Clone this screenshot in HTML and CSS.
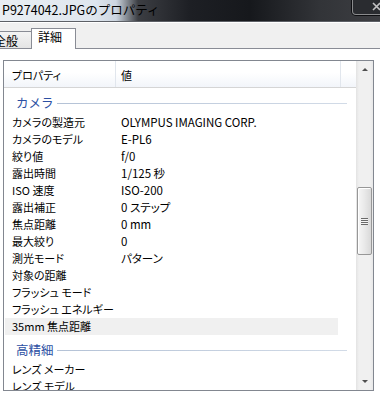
FILE: index.html
```html
<!DOCTYPE html>
<html lang="ja">
<head>
    <meta charset="UTF-8">
    <title>P9274042.JPGのプロパティ</title>
    <link rel="stylesheet" href="styles.css">
</head>
<body>
<div class="window">
    <div class="titlebar">
        <span class="title">P9274042.JPGのプロパティ</span>
        <span class="close">
            <svg width="10" height="9" viewBox="0 0 10 9">
                <path d="M1 1 L8 8 M8 1 L1 8" stroke="#e8e8e8" stroke-width="1.6" fill="none"/>
            </svg>
        </span>
    </div>
    <div class="tabs">
        <div class="tab">全般</div>
        <div class="tab active">詳細</div>
    </div>
    <div class="panel">
        <div class="listbox">
            <div class="list">
                <div class="header">
                    <div class="col col-name">プロパティ</div>
                    <div class="col col-value">値</div>
                    <div class="col col-rest"></div>
                </div>
                <div class="rows">
                    <div class="group"><span>カメラ</span></div>
                    <div class="row"><span class="name">カメラの製造元</span><span class="value">OLYMPUS IMAGING CORP.</span></div>
                    <div class="row"><span class="name">カメラのモデル</span><span class="value">E-PL6</span></div>
                    <div class="row"><span class="name">絞り値</span><span class="value">f/0</span></div>
                    <div class="row"><span class="name">露出時間</span><span class="value">1/125 秒</span></div>
                    <div class="row"><span class="name">ISO 速度</span><span class="value">ISO-200</span></div>
                    <div class="row"><span class="name">露出補正</span><span class="value">0 ステップ</span></div>
                    <div class="row"><span class="name">焦点距離</span><span class="value">0 mm</span></div>
                    <div class="row"><span class="name">最大絞り</span><span class="value">0</span></div>
                    <div class="row"><span class="name">測光モード</span><span class="value">パターン</span></div>
                    <div class="row"><span class="name">対象の距離</span><span class="value"></span></div>
                    <div class="row"><span class="name">フラッシュ モード</span><span class="value"></span></div>
                    <div class="row"><span class="name">フラッシュ エネルギー</span><span class="value"></span></div>
                    <div class="row hover"><span class="name">35mm 焦点距離</span><span class="value"></span></div>
                    <div class="group"><span>高精細</span></div>
                    <div class="row"><span class="name">レンズ メーカー</span><span class="value"></span></div>
                    <div class="row"><span class="name">レンズ モデル</span><span class="value"></span></div>
                </div>
            </div>
            <div class="scrollbar">
                <div class="arrow arrow-up"></div>
                <div class="track">
                    <div class="thumb"><span class="grip"></span></div>
                </div>
                <div class="arrow arrow-down"></div>
            </div>
        </div>
    </div>
</div>
</body>
</html>
```

FILE: styles.css
```css
body {
    margin: 0;
    background: #ffffff;
    font-family: "Noto Sans CJK JP", sans-serif;
    color: #000000;
    overflow: hidden;
}

.window {
    width: 380px;
    height: 400px;
    overflow: hidden;
}

/* title bar */
.titlebar {
    position: relative;
    height: 21px;
    border-bottom: 1px solid #5d6066;
    background: linear-gradient(to right, #e9eef3 0px, #dfe6ee 95px, #ccd5df 116px, #3c3e43 138px, #1d1f24 190px, #16181c 250px, #323438 320px, #3d3e42 380px);
    display: flex;
    align-items: center;
}

.title {
    padding-left: 2px;
    margin-top: -2px;
    font-size: 12.5px;
    line-height: 16px;
    white-space: nowrap;
}

.close {
    position: absolute;
    top: -1px;
    right: -14px;
    width: 40px;
    height: 14px;
    border: 1px solid rgba(255, 255, 255, .45);
    border-radius: 0 0 4px 4px;
    box-shadow: 0 0 0 1px #0d0e11;
    background: #2a2c30;
}

.close svg {
    display: block;
    margin: 2px 0 0 19px;
    opacity: .8;
}

/* tabs */
.tabs {
    height: 26px;
    background: #f0f0f0;
    border-bottom: 1px solid #898c95;
    box-shadow: inset 0 1px 0 #ffffff;
    display: flex;
    align-items: flex-end;
}

.tab {
    height: 14px;
    padding: 2px 13px 0 6px;
    line-height: 14px;
    font-size: 12px;
    border: 1px solid #898c95;
    border-bottom: none;
    background: linear-gradient(#f4f4f4, #e4e4e4);
    white-space: nowrap;
}

.tab:first-child {
    margin-left: -13px;
}

.tab.active {
    height: 20px;
    padding-top: 0;
    line-height: 16px;
    margin-left: -1px;
    margin-bottom: -1px;
    background: #ffffff;
}

/* details panel */
.panel {
    background: #ffffff;
    padding: 11px 0 0 3px;
}

.listbox {
    width: 369px;
    height: 329px;
    border: 1px solid #828790;
    display: flex;
}

.list {
    width: 352px;
    display: flex;
    flex-direction: column;
    overflow: hidden;
}

.header {
    display: flex;
    height: 26px;
    border-bottom: 1px solid #d5d5d5;
    background: linear-gradient(#ffffff, #ffffff 45%, #f2f5fa);
}

.col {
    box-sizing: border-box;
    padding-top: 3px;
    line-height: 23px;
    font-size: 11px;
    font-feature-settings: "palt";
    border-right: 1px solid #e1e6ed;
}

.col-name {
    width: 112px;
    padding-left: 8px;
}

.col-value {
    width: 225px;
    padding-left: 5px;
}

.col-rest {
    flex: 1;
    border-right: none;
}

.rows {
    flex: 1;
    overflow: hidden;
}

.group {
    height: 26px;
    box-sizing: border-box;
    padding: 4px 9px 0 12px;
    display: flex;
    align-items: center;
    font-size: 12.5px;
    line-height: 16px;
    color: #2c4fa3;
}

.group::after {
    content: "";
    flex: 1;
    height: 1px;
    margin-left: 3px;
    background: linear-gradient(to right, #b4c2d6, #d2dbe7);
}

.row {
    display: flex;
    height: 17px;
    line-height: 17px;
    font-size: 11px;
    font-feature-settings: "palt";
    white-space: nowrap;
}

.row .value {
    font-size: 11.5px;
}

.row.hover {
    margin: 0 18px 0 1px;
    background: #f0f0f0;
}

.row .name {
    width: 117px;
    padding-left: 8px;
    box-sizing: border-box;
}

.row.hover .name {
    width: 116px;
    padding-left: 7px;
}

/* scrollbar */
.scrollbar {
    width: 17px;
    display: flex;
    flex-direction: column;
    background: linear-gradient(to right, #e3e3e3, #f0f0f0 3px, #f0f0f0 14px, #e8e8e8);
}

.arrow {
    height: 17px;
    display: flex;
    align-items: center;
    justify-content: center;
}

.arrow::before {
    content: "";
    border-left: 3px solid transparent;
    border-right: 3px solid transparent;
}

.arrow-up::before {
    border-bottom: 3px solid #4f4f4f;
}

.arrow-down::before {
    border-top: 3px solid #4f4f4f;
}

.track {
    flex: 1;
}

.thumb {
    margin: 109px 1px 0 1px;
    height: 66px;
    border: 1px solid #979797;
    border-radius: 2px;
    background: linear-gradient(to right, #f6f6f6, #e9e9e9 50%, #d9d9d9);
    box-shadow: inset 1px 1px 0 #ffffff;
    display: flex;
    align-items: center;
    justify-content: center;
}

.grip {
    width: 7px;
    height: 7px;
    background: repeating-linear-gradient(#6a6a6a 0 1px, #f4f4f4 1px 2px);
}
```
